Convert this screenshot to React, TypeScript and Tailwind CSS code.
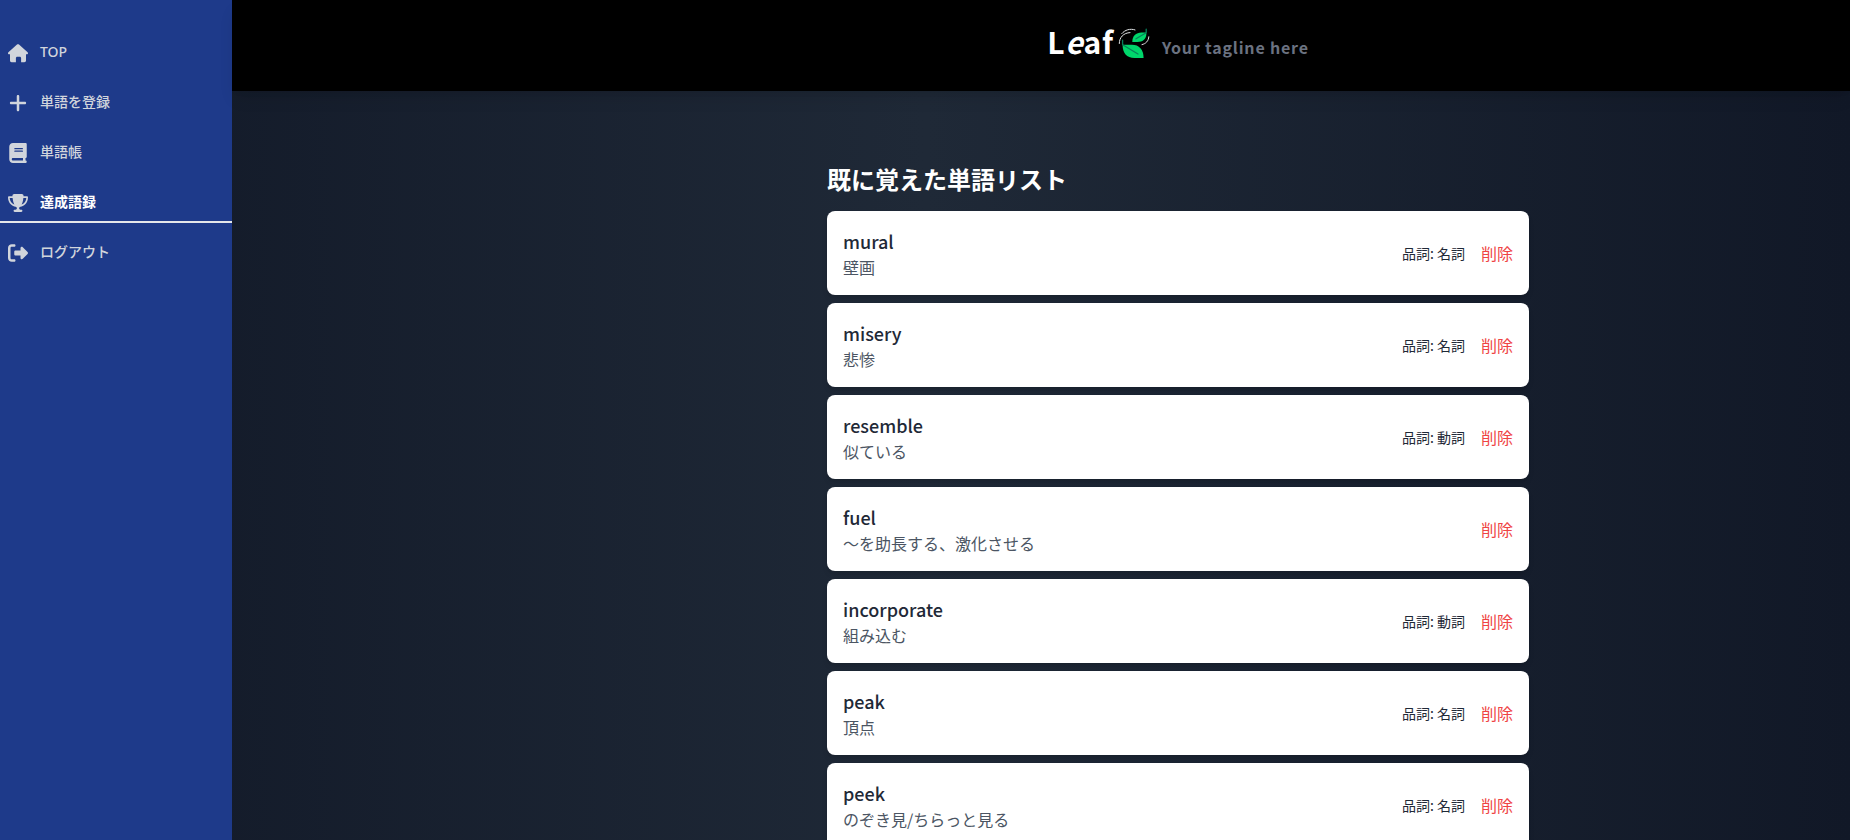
import type { ReactNode } from "react";
import { FaPlus, FaBook, FaTrophy, FaRightFromBracket } from "react-icons/fa6";

type Word = { en: string; ja: string; pos?: string };

const words: Word[] = [
  { en: "mural", ja: "壁画", pos: "名詞" },
  { en: "misery", ja: "悲惨", pos: "名詞" },
  { en: "resemble", ja: "似ている", pos: "動詞" },
  { en: "fuel", ja: "〜を助長する、激化させる" },
  { en: "incorporate", ja: "組み込む", pos: "動詞" },
  { en: "peak", ja: "頂点", pos: "名詞" },
  { en: "peek", ja: "のぞき見/ちらっと見る", pos: "名詞" },
];

function HomeIcon() {
  return (
    <svg viewBox="0 0 20 20" className="size-5" fill="currentColor" aria-hidden="true">
      <path d="M10 1.2c.4 0 .7.1 1 .4l8.6 7.7c.8.7.3 1.9-.7 1.9h-.9v6.3c0 1-.7 1.7-1.7 1.7h-3.200v-4c0-.8-.6-1.400-1.400-1.400H9.300c-.8 0-1.400.6-1.400 1.400v4H3.700c-1 0-1.700-.7-1.700-1.700v-6.300h-.9c-1 0-1.500-1.200-.7-1.900L9 1.600c.3-.3.6-.4 1-.4Z" />
    </svg>
  );
}

function LeafIcon() {
  return (
    <svg viewBox="0 0 32 32" className="size-8 shrink-0" fill="none" aria-hidden="true">
      <path d="M4.600 16.800H14C21 16.800 25.600 21.500 25.600 30H16.500C8.500 30 4.600 25 4.600 16.800Z" fill="#00d66b" />
      <path d="M28.300 4.600V6.500C28 11.300 24.500 14 19.500 14H14.300C14.200 8 18 4.600 23.500 4.600Z" fill="#00d66b" />
      <path d="M4.600 12.200V16.800L20 26M28.200 1.200V4.800L18 10.800" stroke="#07805a" strokeWidth="1.300" strokeLinecap="round" strokeLinejoin="round" />
      <path d="M1.300 15.500C1.200 9.500 5.500 4.800 12 4.600M3.800 5.600C7 1.800 12 .3 17 1.900M30.800 8.800C30.600 12.800 28 15.800 24 16.600" stroke="#e2e5e7" strokeWidth="1" strokeLinecap="round" />
    </svg>
  );
}

function NavItem({ icon, label, active = false }: { icon: ReactNode; label: string; active?: boolean }) {
  return (
    <li>
      <a
        href="#"
        aria-current={active ? "page" : undefined}
        className={
          active
            ? "flex h-[42px] items-center gap-3 border-b-2 border-gray-200 px-2 pt-1 font-bold text-white"
            : "flex h-[42px] items-center gap-3 border-b-2 border-transparent px-2 pt-1 font-medium text-gray-300"
        }
      >
        <span className="flex size-5 shrink-0 items-center justify-center text-gray-300">{icon}</span>
        <span className="pb-0.5">{label}</span>
      </a>
    </li>
  );
}

function WordCard({ word }: { word: Word }) {
  return (
    <li className="flex items-center justify-between rounded-lg bg-white p-4 shadow-md">
      <div>
        <p className="text-lg leading-7 font-medium text-[#1f2937]">{word.en}</p>
        <p className="text-base leading-6 text-[#4b5563]">{word.ja}</p>
      </div>
      <div className="flex items-center gap-4">
        {word.pos && <span className="text-sm text-[#1f2937]">品詞: {word.pos}</span>}
        <button type="button" className="text-base text-[#ef4444]">
          削除
        </button>
      </div>
    </li>
  );
}

export default function App() {
  return (
    <div className="flex h-screen overflow-hidden bg-linear-to-r from-[#111827] via-[#1f2937] to-[#111827] font-['Noto_Sans_CJK_JP',sans-serif]">
      <nav className="w-[232px] shrink-0 bg-[#1e3a8a] pt-[31px] font-['Noto_Sans','Noto_Sans_CJK_JP',sans-serif] text-sm">
        <ul className="flex flex-col gap-2">
          <NavItem icon={<HomeIcon />} label="TOP" />
          <NavItem icon={<FaPlus className="size-5" />} label="単語を登録" />
          <NavItem icon={<FaBook className="size-5" />} label="単語帳" />
          <NavItem icon={<FaTrophy className="size-5" />} label="達成語録" active />
          <NavItem icon={<FaRightFromBracket className="size-5" />} label="ログアウト" />
        </ul>
      </nav>

      <div className="flex min-w-0 grow flex-col">
        <header className="flex h-[91px] shrink-0 items-center justify-center bg-black pb-1 pl-[274px] shadow-lg">
          <a href="#" className="flex items-center gap-1 text-3xl font-bold tracking-wide text-white">
            <span className="pb-1.5">
              L<em>e</em>af
            </span>
            <LeafIcon />
          </a>
          <p className="pt-1.5 pl-3 text-base font-semibold tracking-wider text-[#6b7280]">Your tagline here</p>
        </header>

        <main className="grow overflow-hidden pt-[72px] pl-[274px]">
          <section className="mx-auto max-w-[702px]">
            <h1 className="mb-4 text-2xl leading-8 font-bold text-white">既に覚えた単語リスト</h1>
            <ul className="flex flex-col gap-2">
              {words.map((word) => (
                <WordCard key={word.en} word={word} />
              ))}
            </ul>
          </section>
        </main>
      </div>
    </div>
  );
}
